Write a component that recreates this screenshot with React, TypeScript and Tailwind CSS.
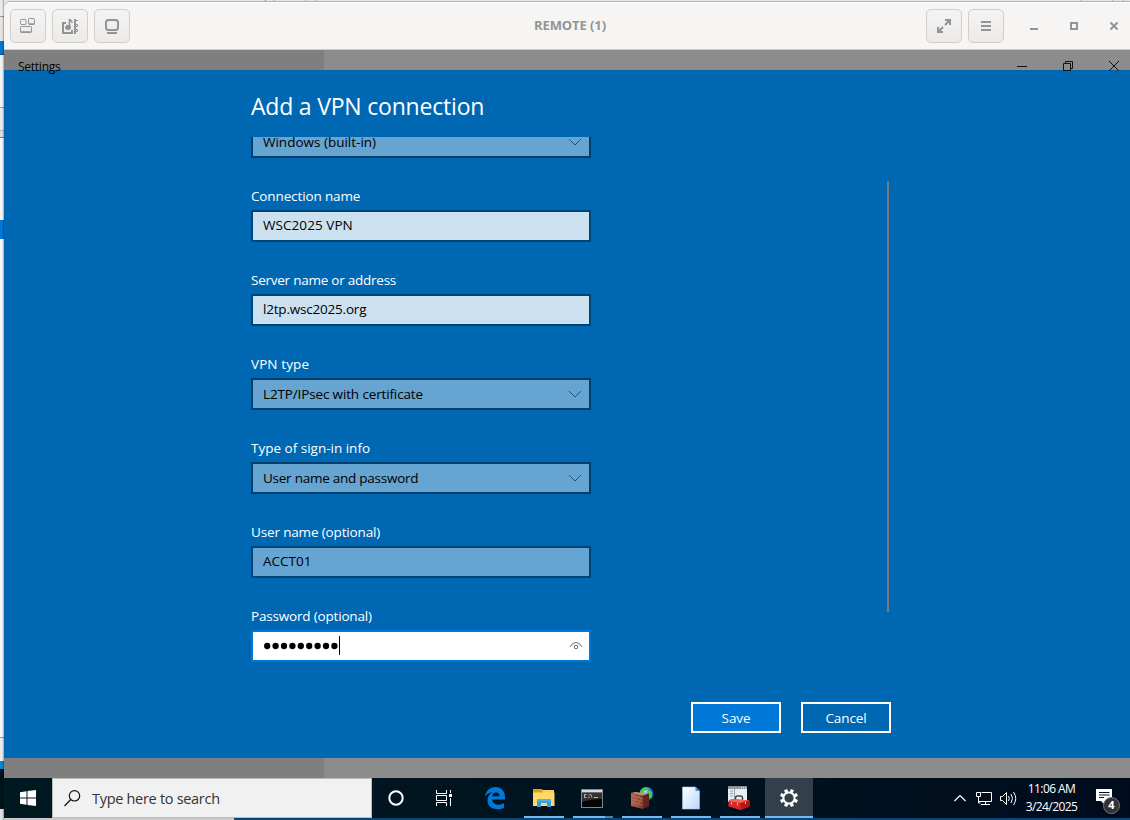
import React from "react";

function HeaderButton({ children }: { children: React.ReactNode }) {
  return (
    <button className="flex h-[34px] w-9 items-center justify-center rounded-[5px] border border-[#d2cecb] bg-linear-to-b from-[#f5f4f2] to-[#ebeae8]">
      {children}
    </button>
  );
}

function ViewerBar() {
  return (
    <header className="relative flex h-12 shrink-0 items-center justify-between rounded-tl-[7px] border-b border-[#d1cdc9] bg-[#f6f5f3] pl-1.5 shadow-[0_-1px_0_#b3b2b0,inset_0_1px_0_#fff]">
      <div className="flex gap-1.5">
        <HeaderButton>
          <svg width="18" height="18" viewBox="0 0 18 18" fill="none" stroke="#929595">
            <rect x="1.500" y="2.500" width="5.500" height="5" rx=".8" />
            <rect x="9.500" y="1.500" width="6" height="6" rx=".8" />
            <path d="M10 7h5" strokeWidth="1.500" />
            <rect x="1.500" y="9.500" width="11" height="6" rx=".8" />
            <path d="M2 15h10" strokeWidth="1.500" />
          </svg>
        </HeaderButton>
        <HeaderButton>
          <svg width="18" height="18" viewBox="0 0 18 18" fill="none" stroke="#929595">
            <path d="M5 6H2v10h9v-3M14 2v15" strokeWidth="2" />
            <path d="M8.500 2v8.500" strokeWidth="1.600" />
            <path d="M8.500 2l3 3.500" strokeWidth="1.500" />
            <ellipse cx="7" cy="10.500" rx="2.500" ry="2.200" fill="#929595" />
            <path d="M14 3.500h3M14 7.500h2.500v2H14M14 12.500h2.500v2H14" />
          </svg>
        </HeaderButton>
        <HeaderButton>
          <svg width="18" height="18" viewBox="0 0 18 18" fill="none" stroke="#929595" strokeWidth="2">
            <rect x="3" y="3" width="12" height="10" rx="2.500" />
            <path d="M4 16h10" />
          </svg>
        </HeaderButton>
      </div>
      <div className="absolute inset-x-0 top-px flex h-[46px] items-center justify-center pl-1.5">
        <h1 className="font-['Open_Sans',sans-serif] text-[13px] font-bold tracking-[-0.1px] whitespace-nowrap text-[#929595]">REMOTE (1)</h1>
      </div>
      <div className="flex items-center gap-1.5">
        <HeaderButton>
          <svg width="16" height="16" viewBox="0 0 16 16" fill="none" stroke="#929595" strokeWidth="2">
            <path d="M9 2h5v5M7 14H2V9M14 2L9 7M2 14l5-5" />
          </svg>
        </HeaderButton>
        <HeaderButton>
          <svg width="16" height="16" viewBox="0 0 16 16" stroke="#929595" strokeWidth="2">
            <path d="M3 4h10M3 8h10M3 12h10" />
          </svg>
        </HeaderButton>
        <div className="flex w-[120px] pl-2">
          <svg width="112" height="16" viewBox="0 0 112 16" fill="none" stroke="#929595" strokeWidth="2">
            <path d="M12 11h8" />
            <rect x="53" y="5" width="6" height="6" />
            <path d="M92.500 4.500l7 7M99.500 4.500l-7 7" />
          </svg>
        </div>
      </div>
    </header>
  );
}

function SettingsBar() {
  return (
    <div className="relative z-10 flex h-5 shrink-0 bg-[#8c8c8c]">
      <div className="w-80 bg-[#7f7f7f] pt-2 pl-3.5">
        <span className="block font-['Open_Sans',sans-serif] text-[12px] leading-[17px] tracking-[-0.25px] text-black">Settings</span>
      </div>
      <svg className="mt-2 ml-auto" width="118" height="16" viewBox="0 0 118 16" fill="none" stroke="#111">
        <path d="M5 8.500h10" />
        <path d="M51.500 5.500h7v7h-7zM53.500 5.500v-2h7v7h-2" />
        <path d="M97 3l10 10M107 3L97 13" />
      </svg>
    </div>
  );
}

function Chevron() {
  return (
    <svg width="14" height="8" viewBox="0 0 14 8" fill="none" stroke="#2b506f" strokeWidth="1">
      <path d="M1 1l6 6 6-6" />
    </svg>
  );
}

const fieldText = "font-['Open_Sans',sans-serif] text-[13.5px] whitespace-nowrap";

function Label({ children, spacing }: { children: string; spacing: string }) {
  return <div className={`mb-1 h-5 leading-5 text-white ${fieldText} ${spacing}`}>{children}</div>;
}

function Select({ value, spacing }: { value: string; spacing: string }) {
  return (
    <div className="flex h-8 items-center justify-between border-2 border-[#003e6e] bg-[#66a4d2] pr-[7px] pl-2.5 text-black">
      <span className={`pt-px leading-[19px] ${fieldText} ${spacing}`}>{value}</span>
      <Chevron />
    </div>
  );
}

function Input({ value, spacing, tone }: { value: string; spacing: string; tone: string }) {
  return (
    <div className={`flex h-8 items-center border-2 border-[#004578] pb-px pl-2.5 text-black ${tone}`}>
      <span className={`leading-[19px] ${fieldText} ${spacing}`}>{value}</span>
    </div>
  );
}

function Password() {
  return (
    <div className="flex h-8 items-center border-2 border-[#0078d7] bg-white pr-1.5 pl-[11px]">
      <svg width="75" height="8" viewBox="0 0 75 8" fill="#000">
        {Array.from({ length: 9 }, (_, i) => (
          <circle key={i} cx={3.2 + i * 8.4} cy="4" r="3.150" />
        ))}
      </svg>
      <div className="mb-0.5 h-[19px] w-px bg-black" />
      <svg className="ml-auto" width="14" height="10" viewBox="0 0 14 10" fill="none" stroke="#6c6c6c">
        <path d="M1 6Q3 1.500 7 1.500T13 6" />
        <circle cx="7" cy="6" r="1.800" />
      </svg>
    </div>
  );
}

function VpnDialog() {
  return (
    <main className="h-[688px] shrink-0 bg-[#0067b3] pl-[247px]">
      <div className="flex h-[67px] items-center pt-1.5">
        <h2 className="font-['Open_Sans',sans-serif] text-[23px] font-normal tracking-[-0.2px] whitespace-nowrap text-white">Add a VPN connection</h2>
      </div>
      <div className="flex h-[535px] w-[638px] justify-between overflow-hidden">
        <form className="-mt-[11px] flex w-[340px] flex-col gap-7">
          <Select value="Windows (built-in)" spacing="tracking-[0px]" />
          <div>
            <Label spacing="tracking-[-0.13px]">Connection name</Label>
            <Input value="WSC2025 VPN" spacing="tracking-[0.07px]" tone="bg-[#cce1f0]" />
          </div>
          <div>
            <Label spacing="tracking-[-0.24px]">Server name or address</Label>
            <Input value="l2tp.wsc2025.org" spacing="tracking-[-0.2px]" tone="bg-[#cce1f0]" />
          </div>
          <div>
            <Label spacing="tracking-[0.1px]">VPN type</Label>
            <Select value="L2TP/IPsec with certificate" spacing="tracking-[-0.14px]" />
          </div>
          <div>
            <Label spacing="tracking-[0px]">Type of sign-in info</Label>
            <Select value="User name and password" spacing="tracking-[-0.25px]" />
          </div>
          <div>
            <Label spacing="tracking-[-0.15px]">User name (optional)</Label>
            <Input value="ACCT01" spacing="tracking-[0px]" tone="bg-[#66a4d2]" />
          </div>
          <div>
            <Label spacing="tracking-[-0.18px]">Password (optional)</Label>
            <Password />
          </div>
        </form>
        <div className="mt-11 h-[431px] w-0.5 bg-[#7a7a7a]" />
      </div>
      <div className="flex w-[640px] justify-end gap-5 pt-[30px]">
        <button className={`h-[31px] w-[90px] border-2 border-white bg-[#0078d7] pt-px leading-[19px] tracking-[-0.1px] text-white ${fieldText}`}>Save</button>
        <button className={`h-[31px] w-[90px] border-2 border-white pt-px leading-[19px] tracking-[-0.1px] text-white ${fieldText}`}>Cancel</button>
      </div>
    </main>
  );
}

function TaskButton({ children, tone = "", bar = "" }: { children: React.ReactNode; tone?: string; bar?: string }) {
  return (
    <div className={`flex h-10 w-12 flex-col items-center ${tone}`}>
      <div className="flex h-[38px] items-center justify-center pt-0.5">{children}</div>
      <div className={`h-0.5 ${bar}`} />
    </div>
  );
}

function EdgeIcon() {
  return (
    <svg width="22" height="24" viewBox="0 0 22 24" fill="#0078d7">
      <path d="M1 10.500C2 4.500 6 1 11.500 1 17.500 1 21 5.500 21 11v2.500H8.200c.2 3.500 3 5.300 6.300 5.300 2.100 0 4-.6 5.500-1.500v4.400c-1.700 1-4.100 1.500-6.500 1.500C7.500 23.200 3.500 19.700 3.500 14.500c0-3.700 2-6.700 5.200-8.200C5.500 6.600 2.700 8 1 10.500zM8.300 10.200h7.200c0-2.400-1.200-3.800-3.400-3.800-2.100 0-3.500 1.500-3.800 3.800z" />
    </svg>
  );
}

function FolderIcon() {
  return (
    <svg width="22" height="20" viewBox="0 0 22 20">
      <path d="M0 1h9l1.500 2H21v4H0z" fill="#e4a00c" />
      <path d="M9.500 2H21v3H9.500z" fill="#fbd05f" />
      <path d="M0 4.500h21.500V18H0z" fill="#ffd968" />
      <path d="M4 19v-6.500q0-1.500 1.500-1.500h11q1.500 0 1.500 1.500V19h-4v-4H8v4z" fill="#3b9ad9" />
      <path d="M4 12.500q0-1.500 1.500-1.500h11q1.500 0 1.500 1.500v1H4z" fill="#55b0e4" />
    </svg>
  );
}

function TerminalIcon() {
  return (
    <svg width="22" height="19" viewBox="0 0 22 19">
      <rect x=".5" y=".5" width="21" height="18" fill="#050505" stroke="#858585" />
      <path d="M1 1h20v2.500H1z" fill="#ddd" />
      <path d="M1 4h20v6Q10 10 1 13z" fill="#333" />
      <path d="M5.500 5.500H3.500v3h2M9.500 5l1.500 3.500M13 8.500h4" fill="none" stroke="#ddd" strokeWidth=".8" />
      <path d="M7.500 5.500h1v1h-1zM7.500 8h1v1h-1z" fill="#ddd" />
    </svg>
  );
}

function FirewallIcon() {
  return (
    <svg width="24" height="24" viewBox="0 0 24 24">
      <defs>
        <radialGradient id="globe" cx=".35" cy=".3" r=".8">
          <stop stopColor="#c5f4ff" />
          <stop offset=".4" stopColor="#2c9be5" />
          <stop offset="1" stopColor="#073a9b" />
        </radialGradient>
        <linearGradient id="wall">
          <stop stopColor="#b0614e" />
          <stop offset="1" stopColor="#7d3a2d" />
        </linearGradient>
      </defs>
      <circle cx="16.500" cy="8" r="7" fill="url(#globe)" />
      <path d="M10 6c1-3 4-5 6-4.500l1 2-3 2-1 4h-2.500zM18 4l4 2v5l-2 2-2-4z" fill="#55c83a" />
      <path d="M1 7l12 2v14L1 20z" fill="url(#wall)" />
      <path d="M1 7l4-1 14 1.500L13 9.500z" fill="#c98f79" />
      <path d="M13 9.500l6-2v13L13 23z" fill="#5b211b" />
      <path d="M1 10l12 2.500M1 13l12 2.500M1 16l12 3M4 8v2.500M9 9v3M6 11v3M11 12v3M4 14v3M9 15v3M7 18v3" stroke="#c98f79" strokeWidth=".4" />
      <path d="M13 13l6-2M13 16l6-2M13 19l6-2" stroke="#8c4a3c" strokeWidth=".4" />
    </svg>
  );
}

function DocumentIcon() {
  return (
    <svg width="18" height="24" viewBox="0 0 18 24">
      <defs>
        <linearGradient id="paper" x2="1" y2="1">
          <stop stopColor="#fff" />
          <stop offset="1" stopColor="#b9d8f9" />
        </linearGradient>
      </defs>
      <path d="M.5 1h13L17.500 5v18H.5z" fill="url(#paper)" stroke="#a5c6e8" strokeWidth=".6" />
      <path d="M13.500 1v4h4z" fill="#3d8ee4" />
    </svg>
  );
}

function ToolboxIcon() {
  return (
    <svg width="23" height="24" viewBox="0 0 23 24">
      <path d="M1 .5h19V16H1z" fill="#e8eef2" />
      <path d="M1 .5h19V3H1z" fill="#8e9aa5" />
      <path d="M14 1.200h1v1h-1zM16 1.200h1v1h-1zM18 1.200h1v1h-1z" fill="#fff" />
      <path d="M3 5h3M3 7.500h3M3 10h3M7.500 3v12" stroke="#8fa2b0" />
      <path d="M8.500 14v-2q0-2 2-2h3q2 0 2 2v2" fill="none" stroke="#444" strokeWidth="1.500" />
      <path d="M1.500 15l3-2 18 1.500v6l-9 3.500-12-3.500z" fill="#d52827" />
      <path d="M1.500 15l3-2 18 1.500-9 2.500z" fill="#ef6558" />
      <path d="M13.500 17l9-2.500v6l-9 3.500z" fill="#b91418" />
      <path d="M4.500 16v2.500M10.500 17v2.500M18.500 15.500v2.500" stroke="#e9b0a8" />
    </svg>
  );
}

function GearIcon() {
  return (
    <svg width="20" height="20" viewBox="-10 -10 20 20" fill="none" stroke="#fff">
      <circle r="5.600" strokeWidth="2" />
      {[22.5, 67.5, 112.5, 157.5, 202.5, 247.5, 292.5, 337.5].map((a) => (
        <path key={a} d="M0-6V-9" strokeWidth="3.300" transform={`rotate(${a})`} />
      ))}
    </svg>
  );
}

function Taskbar() {
  return (
    <footer className="flex h-10 shrink-0 bg-linear-to-r from-[#001820] via-[#001420] to-[#000c1e]">
      <div className="flex w-12 items-center justify-center">
        <svg width="16" height="16" viewBox="0 0 16 16" fill="#fff">
          <path d="M0 2.300l6.500-1v6.200H0zM7.500 1.100L16 0v7.500H7.500zM0 8.500h6.500v6.200l-6.500-1zM7.500 8.500H16V16l-8.500-1.100z" />
        </svg>
      </div>
      <div className="flex w-80 items-center border border-[#bbb] bg-[#f1f1f1] pl-[11px]">
        <svg width="17" height="17" viewBox="0 0 17 17" fill="none" stroke="#111" strokeWidth="1.200">
          <circle cx="10.500" cy="5.800" r="5.200" />
          <path d="M6.800 9.500L.5 16" />
        </svg>
        <span className="ml-[11px] pt-0.5 font-['Open_Sans',sans-serif] text-[14.5px] tracking-[-0.3px] whitespace-nowrap text-[#333]">Type here to search</span>
      </div>
      <TaskButton>
        <svg width="18" height="18" viewBox="0 0 18 18"><circle cx="9" cy="9" r="6.700" fill="none" stroke="#fff" strokeWidth="2" /></svg>
      </TaskButton>
      <TaskButton>
        <svg width="18" height="16" viewBox="0 0 18 16" fill="none" stroke="#fff">
          <path d="M1.500 0v3.500h10V0M1.500 5.500h10v5h-10zM1.500 16v-3.500h10V16M15.500 0v3M15.500 8v8" />
          <path d="M14 4h3v3h-3z" fill="#fff" stroke="none" />
        </svg>
      </TaskButton>
      <div className="ml-[3px] flex gap-px">
        <TaskButton><EdgeIcon /></TaskButton>
        <TaskButton bar="w-10 bg-[#76b9ed]"><FolderIcon /></TaskButton>
        <TaskButton bar="w-10 border-r-8 border-[#4f7ea5] bg-[#76b9ed]"><div className="pr-0.5"><TerminalIcon /></div></TaskButton>
        <TaskButton bar="w-10 bg-[#76b9ed]"><FirewallIcon /></TaskButton>
        <TaskButton bar="w-10 bg-[#76b9ed]"><div className="pr-px"><DocumentIcon /></div></TaskButton>
        <TaskButton bar="w-10 bg-[#76b9ed]"><div className="pr-[3px]"><ToolboxIcon /></div></TaskButton>
        <TaskButton tone="bg-[#33404b]" bar="w-12 bg-[#76b9ed]"><GearIcon /></TaskButton>
      </div>
      <div className="ml-auto flex items-center font-['Open_Sans',sans-serif] text-white">
        <svg width="66" height="20" viewBox="0 0 66 20" fill="none" stroke="#fff">
          <path d="M1.500 13l5.500-5.500 5.500 5.500" strokeWidth="1.200" />
          <path d="M28.500 4.500h10v9H26M32.500 13.500v3M28 16.500h9M23.500 4.500h4v4h-4zM25.500 9v6h2" />
          <path d="M47.500 8.500h2l4-4v12l-4-4h-2zM55.500 8q1.500 2.500 0 5M58 6q3 4.500 0 9M60.500 4q4.500 6.500 0 13" />
        </svg>
        <div className="ml-[3px] w-[60px] pr-px text-center text-[12px] leading-[18px] tracking-[-0.6px] whitespace-nowrap">
          <div>11:06 AM</div>
          <div>3/24/2025</div>
        </div>
        <div className="relative ml-3.5 h-6 w-[34px]">
          <svg width="18" height="20" viewBox="0 0 18 20">
            <path d="M0 3h16v12H9v4l-4-4H0z" fill="#fff" />
            <path d="M3 6.500h10.500M3 9h10.500M3 11.500h5" stroke="#001420" />
          </svg>
          <span className="absolute top-[11px] left-[7px] flex size-[17px] items-center justify-center rounded-full border border-[#777] bg-[#303238] text-[11px] font-bold">4</span>
        </div>
      </div>
    </footer>
  );
}

function BackgroundEdge() {
  return (
    <aside className="flex w-1 shrink-0 flex-col bg-[#eaeaea]">
      <div className="h-[17px] border-b border-[#999]" />
      <div className="h-6 bg-[#e5e3e1]" />
      <div className="h-3.5 border-b border-[#004b88] bg-[#0078d7]" />
      <div className="h-[53px] border-b border-[#999] bg-[#f1f1f1]" />
      <div className="h-[23px] border-b border-[#bbb]" />
      <div className="h-[7px] border-b border-[#777] bg-[#ddd]" />
      <div className="h-[82px] bg-[#f4f4f4]" />
      <div className="h-[19px] bg-[#0078d7]" />
      <div className="h-[499px] border-b border-[#999] bg-[#f4f4f4]" />
      <div className="h-[23px]" />
      <div className="h-2 bg-[#0089c9]" />
      <div className="h-10 bg-[#00131c]" />
      <div className="flex-1 bg-[#ddd]" />
    </aside>
  );
}

export default function App() {
  return (
    <div className="flex h-[820px] w-[1130px] overflow-hidden bg-[#e7e6e4]">
      <BackgroundEdge />
      <div className="flex min-w-0 flex-1 flex-col shadow-[-1px_0_1px_rgba(0,0,0,0.25)]">
        <div className="flex h-0.5 shrink-0 justify-between">
          <div className="w-[262px] border-r border-[#888]" />
          <svg className="mr-auto ml-1.5" width="60" height="2" viewBox="0 0 60 2" fill="none" stroke="#bbb">
            <path d="M0 2l3-2M33 0l3 2M42 2l3-2" />
          </svg>
          <svg width="60" height="2" viewBox="0 0 60 2" fill="none" stroke="#bbb">
            <path d="M9 2l3-2M42 0l2 2M51 2l3-2" />
          </svg>
        </div>
        <ViewerBar />
        <SettingsBar />
        <VpnDialog />
        <div className="flex h-5 shrink-0 bg-[#8c8c8c]"><div className="w-80 bg-[#7f7f7f]" /></div>
        <Taskbar />
        <div className="flex h-0.5">
          <div className="w-[230px] bg-[#c9c9c9]" />
          <div className="flex-1 bg-[#06477c]" />
        </div>
      </div>
    </div>
  );
}
